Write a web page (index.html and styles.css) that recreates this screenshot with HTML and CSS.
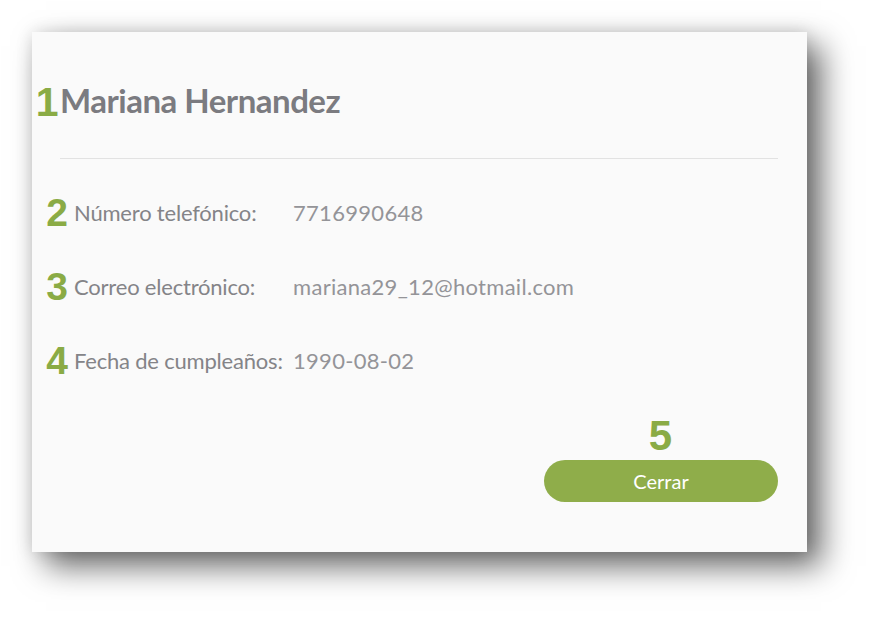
FILE: index.html
```html
<!DOCTYPE html>
<html lang="es">
<head>
  <meta charset="UTF-8" />
  <meta name="viewport" content="width=device-width, initial-scale=1.0"/>
  <title>Contacto</title>
  <link rel="stylesheet" href="styles.css">
</head>
<body>

<div class="card">

  <h1 class="nombre"><span class="marca marca-titulo">1</span>Mariana Hernandez</h1>

  <hr class="divisor">

  <div class="fila">
    <span class="marca">2</span>
    <span class="etiqueta">Número telefónico:</span>
    <span class="valor">7716990648</span>
  </div>

  <div class="fila">
    <span class="marca">3</span>
    <span class="etiqueta">Correo electrónico:</span>
    <span class="valor">mariana29_12@hotmail.com</span>
  </div>

  <div class="fila">
    <span class="marca">4</span>
    <span class="etiqueta">Fecha de cumpleaños:</span>
    <span class="valor">1990-08-02</span>
  </div>

  <div class="acciones">
    <span class="marca marca-boton">5</span>
    <button class="btn-cerrar">Cerrar</button>
  </div>

</div>

</body>
</html>
```

FILE: styles.css
```css
:root {
  --bg: #ffffff;
  --card: #fafafa;
  --verde: #8fad4a;
  --marca: #8aab45;
  --titulo: #7b7b80;
  --etiqueta: #848488;
  --valor: #949498;
}
* {
  box-sizing: border-box;
}
html, body {
  min-height: 100%;
}
body {
  margin: 0;
  padding-bottom: 70px;
  background: var(--bg);
  font-family: Lato, 'Open Sans', sans-serif;
}
.card {
  margin: 32px 0 0 32px;
  width: 775px;
  height: 520px;
  padding: 48px 29px 0 28px;
  background: var(--card);
  box-shadow: 14px 14px 30px rgba(0,0,0,0.6), 0 0 16px rgba(0,0,0,0.12);
}
.nombre {
  position: relative;
  margin: 0;
  font-size: 33px;
  line-height: 40px;
  font-weight: 700;
  letter-spacing: -0.5px;
  color: var(--titulo);
}
.divisor {
  margin: 38px 0 0;
  border: none;
  border-top: 1px solid #e2e2e2;
}
.fila {
  position: relative;
  display: flex;
  align-items: baseline;
  margin-top: 44px;
  padding-left: 14px;
  line-height: 30px;
}
.divisor + .fila {
  margin-top: 39px;
}
.etiqueta {
  width: 219px;
  flex-shrink: 0;
  font-size: 22px;
  letter-spacing: -0.2px;
  color: var(--etiqueta);
}
.valor {
  font-size: 22px;
  letter-spacing: 0.3px;
  color: var(--valor);
}
.marca {
  position: absolute;
  right: calc(100% - 8px);
  top: -3px;
  font-family: 'Liberation Sans', Arial, sans-serif;
  font-weight: 700;
  font-size: 39px;
  line-height: 36px;
  color: var(--marca);
}
.marca-titulo {
  right: calc(100% + 5px);
  top: 4px;
  font-size: 41px;
  transform: translateX(3px);
}
.acciones {
  position: relative;
  display: flex;
  justify-content: flex-end;
  margin-top: 84px;
}
.marca-boton {
  right: 106px;
  top: -42px;
  font-size: 42px;
}
.btn-cerrar {
  width: 234px;
  height: 42px;
  border: none;
  border-radius: 21px;
  background: var(--verde);
  color: #fff;
  font-family: Lato, 'Open Sans', sans-serif;
  font-size: 20px;
  cursor: pointer;
}
```
